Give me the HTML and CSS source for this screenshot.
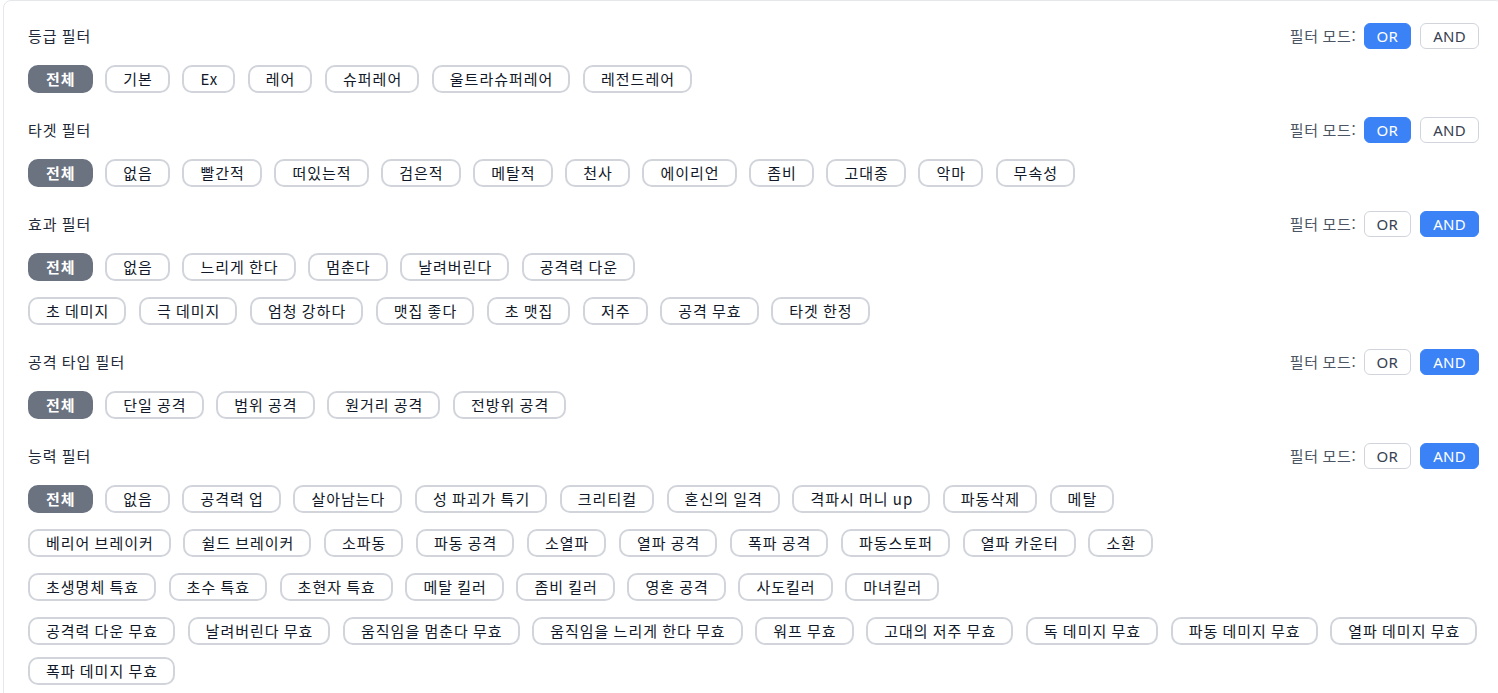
FILE: index.html
```html
<!DOCTYPE html>
<html lang="ko">
<head>
<meta charset="utf-8">
<title>필터</title>
<link rel="stylesheet" href="styles.css">
</head>
<body>
<div class="card">
  <section class="filter">
    <div class="filter-head">
      <h3 class="filter-title">등급 필터</h3>
      <div class="mode">
        <span class="mode-label">필터 모드:</span>
        <button class="mode-btn active">OR</button>
        <button class="mode-btn">AND</button>
      </div>
    </div>
    <div class="chip-groups">
      <div class="chips">
        <button class="chip active">전체</button>
        <button class="chip">기본</button>
        <button class="chip">Ex</button>
        <button class="chip">레어</button>
        <button class="chip">슈퍼레어</button>
        <button class="chip">울트라슈퍼레어</button>
        <button class="chip">레전드레어</button>
      </div>
    </div>
  </section>

  <section class="filter">
    <div class="filter-head">
      <h3 class="filter-title">타겟 필터</h3>
      <div class="mode">
        <span class="mode-label">필터 모드:</span>
        <button class="mode-btn active">OR</button>
        <button class="mode-btn">AND</button>
      </div>
    </div>
    <div class="chip-groups">
      <div class="chips">
        <button class="chip active">전체</button>
        <button class="chip">없음</button>
        <button class="chip">빨간적</button>
        <button class="chip">떠있는적</button>
        <button class="chip">검은적</button>
        <button class="chip">메탈적</button>
        <button class="chip">천사</button>
        <button class="chip">에이리언</button>
        <button class="chip">좀비</button>
        <button class="chip">고대종</button>
        <button class="chip">악마</button>
        <button class="chip">무속성</button>
      </div>
    </div>
  </section>

  <section class="filter">
    <div class="filter-head">
      <h3 class="filter-title">효과 필터</h3>
      <div class="mode">
        <span class="mode-label">필터 모드:</span>
        <button class="mode-btn">OR</button>
        <button class="mode-btn active">AND</button>
      </div>
    </div>
    <div class="chip-groups">
      <div class="chips">
        <button class="chip active">전체</button>
        <button class="chip">없음</button>
        <button class="chip">느리게 한다</button>
        <button class="chip">멈춘다</button>
        <button class="chip">날려버린다</button>
        <button class="chip">공격력 다운</button>
      </div>
      <div class="chips">
        <button class="chip">초 데미지</button>
        <button class="chip">극 데미지</button>
        <button class="chip">엄청 강하다</button>
        <button class="chip">맷집 좋다</button>
        <button class="chip">초 맷집</button>
        <button class="chip">저주</button>
        <button class="chip">공격 무효</button>
        <button class="chip">타겟 한정</button>
      </div>
    </div>
  </section>

  <section class="filter">
    <div class="filter-head">
      <h3 class="filter-title">공격 타입 필터</h3>
      <div class="mode">
        <span class="mode-label">필터 모드:</span>
        <button class="mode-btn">OR</button>
        <button class="mode-btn active">AND</button>
      </div>
    </div>
    <div class="chip-groups">
      <div class="chips">
        <button class="chip active">전체</button>
        <button class="chip">단일 공격</button>
        <button class="chip">범위 공격</button>
        <button class="chip">원거리 공격</button>
        <button class="chip">전방위 공격</button>
      </div>
    </div>
  </section>

  <section class="filter">
    <div class="filter-head">
      <h3 class="filter-title">능력 필터</h3>
      <div class="mode">
        <span class="mode-label">필터 모드:</span>
        <button class="mode-btn">OR</button>
        <button class="mode-btn active">AND</button>
      </div>
    </div>
    <div class="chip-groups">
      <div class="chips">
        <button class="chip active">전체</button>
        <button class="chip">없음</button>
        <button class="chip">공격력 업</button>
        <button class="chip">살아남는다</button>
        <button class="chip">성 파괴가 특기</button>
        <button class="chip">크리티컬</button>
        <button class="chip">혼신의 일격</button>
        <button class="chip">격파시 머니 up</button>
        <button class="chip">파동삭제</button>
        <button class="chip">메탈</button>
      </div>
      <div class="chips">
        <button class="chip">베리어 브레이커</button>
        <button class="chip">쉴드 브레이커</button>
        <button class="chip">소파동</button>
        <button class="chip">파동 공격</button>
        <button class="chip">소열파</button>
        <button class="chip">열파 공격</button>
        <button class="chip">폭파 공격</button>
        <button class="chip">파동스토퍼</button>
        <button class="chip">열파 카운터</button>
        <button class="chip">소환</button>
      </div>
      <div class="chips">
        <button class="chip">초생명체 특효</button>
        <button class="chip">초수 특효</button>
        <button class="chip">초현자 특효</button>
        <button class="chip">메탈 킬러</button>
        <button class="chip">좀비 킬러</button>
        <button class="chip">영혼 공격</button>
        <button class="chip">사도킬러</button>
        <button class="chip">마녀킬러</button>
      </div>
      <div class="chips">
        <button class="chip">공격력 다운 무효</button>
        <button class="chip">날려버린다 무효</button>
        <button class="chip">움직임을 멈춘다 무효</button>
        <button class="chip">움직임을 느리게 한다 무효</button>
        <button class="chip">워프 무효</button>
        <button class="chip">고대의 저주 무효</button>
        <button class="chip">독 데미지 무효</button>
        <button class="chip">파동 데미지 무효</button>
        <button class="chip">열파 데미지 무효</button>
        <button class="chip">폭파 데미지 무효</button>
      </div>
    </div>
  </section>
</div>
</body>
</html>
```
FILE: styles.css
```css
html, body {
  margin: 0;
  padding: 0;
  background: #ffffff;
  overflow: hidden;
}

body {
  font-family: "Noto Sans CJK KR", "Noto Sans", sans-serif;
  font-size: 15px;
  letter-spacing: 1px;
  word-spacing: -1px;
  color: #111827;
}

.card {
  box-sizing: border-box;
  width: 1501px;
  margin-left: 3px;
  border: 1px solid #e5e7eb;
  border-radius: 8px;
  padding: 22px 24px 24px;
  background: #ffffff;
  display: flex;
  flex-direction: column;
  gap: 24px;
}

.filter {
  display: flex;
  flex-direction: column;
  gap: 16px;
}

.filter-head {
  display: flex;
  align-items: center;
  justify-content: space-between;
}

.filter-title {
  margin: 0;
  font-size: 15px;
  font-weight: 400;
  color: #1f2937;
  line-height: 20px;
}

.mode {
  display: flex;
  align-items: center;
  gap: 9px;
}

.mode-label {
  color: #4b5563;
  font-size: 15px;
  line-height: 20px;
  letter-spacing: 0.7px;
  margin-right: -2px;
}

.mode-btn {
  font-family: "Noto Sans", "Noto Sans CJK KR", sans-serif;
  font-size: 15px;
  letter-spacing: 0.3px;
  line-height: 20px;
  height: 26px;
  padding: 0 12px;
  border: 1px solid #d1d5db;
  border-radius: 6px;
  background: #ffffff;
  color: #374151;
  cursor: pointer;
}

.mode-btn.active {
  background: #3b82f6;
  border-color: #3b82f6;
  color: #ffffff;
}

.chip-groups {
  display: flex;
  flex-direction: column;
  gap: 16px;
}

.chips {
  display: flex;
  flex-wrap: wrap;
  gap: 12px 12.6px;
}

.chip {
  font-family: "Noto Sans CJK KR", "Noto Sans", sans-serif;
  font-size: 15px;
  letter-spacing: 1px;
  word-spacing: -1px;
  line-height: 20px;
  padding: 2px 15px 2px 16px;
  border: 2px solid #d1d5db;
  border-radius: 10px;
  background: #ffffff;
  color: #111827;
  cursor: pointer;
}

.chip.active {
  background: #6b7280;
  border-color: #6b7280;
  color: #ffffff;
  font-weight: 700;
}
```
